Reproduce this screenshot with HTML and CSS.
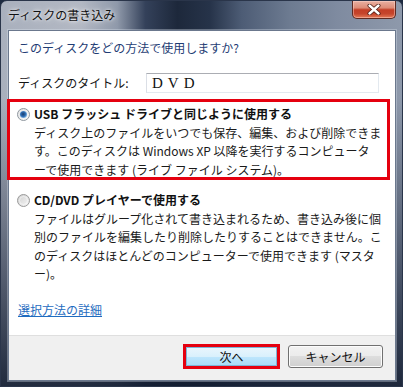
FILE: index.html
```html
<!DOCTYPE html>
<html lang="ja">
<head>
<meta charset="utf-8">
<title>ディスクの書き込み</title>
<link rel="stylesheet" href="styles.css">
</head>
<body>
<div class="window">
  <div class="titlebar">
    <div class="title">ディスクの書き込み</div>
    <div class="close">
      <svg width="14" height="11" viewBox="0 0 14 11"><path d="M2.5 1.5 L11.5 9.5 M11.5 1.5 L2.5 9.5" stroke="#4a1a12" stroke-width="4" stroke-linecap="round"/><path d="M2.5 1.5 L11.5 9.5 M11.5 1.5 L2.5 9.5" stroke="#ffffff" stroke-width="2.4" stroke-linecap="round"/></svg>
    </div>
  </div>
  <div class="client">
    <div class="content">
      <div class="heading">このディスクをどの方法で使用しますか?</div>
      <div class="name-row">
        <span class="label">ディスクのタイトル:</span>
        <div class="input">DVD</div>
      </div>
      <div class="option marked">
        <span class="radio">
          <svg width="13" height="13" viewBox="0 0 13 13"><defs><radialGradient id="dot" cx="0.45" cy="0.45" r="0.6"><stop offset="0" stop-color="#1a3c6c"/><stop offset="0.55" stop-color="#2e6cb2"/><stop offset="1" stop-color="#9ccaf0"/></radialGradient><linearGradient id="rb1" x1="0" y1="0" x2="1" y2="1"><stop offset="0" stop-color="#e2e2e2"/><stop offset="1" stop-color="#fbfbfb"/></linearGradient></defs><circle cx="6.5" cy="6.5" r="6" fill="url(#rb1)" stroke="#8f979f"/><circle cx="6.5" cy="6.5" r="3.6" fill="url(#dot)"/></svg>
        </span>
        <div class="otitle">USB フラッシュ ドライブと同じように使用する</div>
        <div class="odesc">ディスク上のファイルをいつでも保存、編集、および削除できま<br>す。このディスクは Windows XP 以降を実行するコンピュータ<br>ーで使用できます (ライブ ファイル システム)。</div>
      </div>
      <div class="option">
        <span class="radio">
          <svg width="13" height="13" viewBox="0 0 13 13"><defs><linearGradient id="rb2" x1="0" y1="0" x2="1" y2="1"><stop offset="0" stop-color="#cfcfcf"/><stop offset="1" stop-color="#f6f6f6"/></linearGradient></defs><circle cx="6.5" cy="6.5" r="6" fill="url(#rb2)" stroke="#9b9b9b"/><circle cx="6.5" cy="6.5" r="4" fill="none" stroke="#ffffff" stroke-opacity="0.5"/></svg>
        </span>
        <div class="otitle">CD/DVD プレイヤーで使用する</div>
        <div class="odesc">ファイルはグループ化されて書き込まれるため、書き込み後に個<br>別のファイルを編集したり削除したりすることはできません。こ<br>のディスクはほとんどのコンピューターで使用できます (マスタ<br>ー)。</div>
      </div>
      <a class="link" href="#">選択方法の詳細</a>
    </div>
    <div class="footer">
      <div class="btn next">次へ</div>
      <div class="btn cancel">キャンセル</div>
    </div>
  </div>
</div>
</body>
</html>
```

FILE: styles.css
```css
html, body {
  margin: 0;
  padding: 0;
  background: #1d2a40;
}

body {
  font-family: "Noto Sans CJK JP", "Noto Sans", sans-serif;
  font-size: 12px;
  color: #141414;
}

.window {
  width: 403px;
  height: 387px;
  box-sizing: border-box;
  border: 1px solid #2a354a;
  border-radius: 7px 7px 0 0;
  display: flex;
  flex-direction: column;
  overflow: hidden;
  background:
    linear-gradient(180deg, rgba(20, 30, 52, 0) 0%, rgba(20, 30, 52, 0) 25%, rgba(20, 30, 52, 0.55) 70%, rgba(18, 28, 48, 0.9) 100%),
    linear-gradient(90deg, #a9b0bd 0%, #b3b8c3 20%, #8f99aa 29%, #34415a 36%, #1d283b 44%, #263349 52%, #4d5c75 60%, #6d7b91 72%, #7f8ba0 84%, #8e99ab 100%);
}

.titlebar {
  height: 29px;
  display: flex;
  align-items: flex-start;
  flex: none;
}

.title {
  margin: 5px 0 0 7px;
  line-height: 18px;
  font-size: 12px;
  color: #111;
  text-shadow: 0 0 6px rgba(255, 255, 255, 0.9), 0 0 3px rgba(255, 255, 255, 0.8);
}

.close {
  margin-left: auto;
  margin-right: 6px;
  width: 44px;
  height: 18px;
  box-sizing: border-box;
  border: 1px solid #5e2a22;
  border-top: none;
  border-radius: 0 0 5px 5px;
  background: linear-gradient(180deg, #e9b0a2 0%, #dd8c77 40%, #c33e26 52%, #c5452c 75%, #e57a58 100%);
  box-shadow: inset 0 0 0 1px rgba(255, 220, 210, 0.45);
  display: flex;
  align-items: center;
  justify-content: center;
}

.client {
  flex: 1;
  margin: 0 6px 5px 7px;
  background: #ffffff;
  border: 1px solid #6b788d;
  box-shadow: 0 0 0 1px rgba(220, 228, 240, 0.35);
  display: flex;
  flex-direction: column;
}

.content {
  flex: 1;
  padding: 6.5px 9px 0 9px;
  display: flex;
  flex-direction: column;
  align-items: flex-start;
}

.heading {
  line-height: 19px;
  color: #1f3d74;
}

.name-row {
  margin-top: 16.5px;
  display: flex;
  align-items: center;
  height: 20px;
}

.label {
  width: 128px;
  line-height: 20px;
}

.input {
  width: 233px;
  height: 20px;
  box-sizing: border-box;
  border: 1px solid #abadb3;
  border-left-color: #dbdfe6;
  border-right-color: #e3e9ef;
  border-bottom-color: #e3e9ef;
  padding-left: 5px;
  font-family: "Liberation Serif", "DejaVu Serif", serif;
  font-size: 15px;
  line-height: 18px;
  letter-spacing: 5px;
  color: #111;
}

.option {
  margin-left: -11px;
  width: 383px;
  box-sizing: border-box;
  border: 3px solid transparent;
  padding: 3px 0 0 7px;
  display: grid;
  grid-template-columns: 13px 1fr;
  column-gap: 4px;
  line-height: 18.5px;
  margin-top: 5px;
}

.option.marked {
  margin-top: 6px;
  height: 81px;
  border-color: #e5000f;
}

.radio {
  grid-row: 1;
  grid-column: 1;
  height: 13px;
  margin-top: 2.75px;
  display: block;
}

.radio svg {
  display: block;
}

.otitle {
  grid-row: 1;
  grid-column: 2;
  font-weight: bold;
  color: #111;
}

.odesc {
  grid-row: 2;
  grid-column: 2;
  white-space: nowrap;
  color: #1a1a1a;
}

.link {
  margin-top: 14px;
  line-height: 18.5px;
  color: #1f6cc0;
  text-decoration: underline;
}

.footer {
  flex: none;
  border-top: 1px solid #dfdfdf;
  background: #f0f0f0;
  padding: 8px 12px 11px;
  display: flex;
  justify-content: flex-end;
  align-items: center;
  gap: 8px;
}

.btn {
  box-sizing: border-box;
  display: flex;
  align-items: center;
  justify-content: center;
  color: #111;
  font-size: 12px;
}

.next {
  width: 97px;
  height: 25px;
  border: 3px solid #e5000f;
  background: linear-gradient(180deg, #eaf6fd 0%, #d9f0fc 50%, #bee6fd 50%, #a9dbf6 100%);
  box-shadow: inset 0 0 0 1px #7eb4d6;
}

.cancel {
  width: 95px;
  height: 23px;
  border: 1px solid #707070;
  border-radius: 3px;
  background: linear-gradient(180deg, #f2f2f2 0%, #ebebeb 50%, #dddddd 50%, #cfcfcf 100%);
  box-shadow: inset 0 0 0 1px #fcfcfc;
}
```
